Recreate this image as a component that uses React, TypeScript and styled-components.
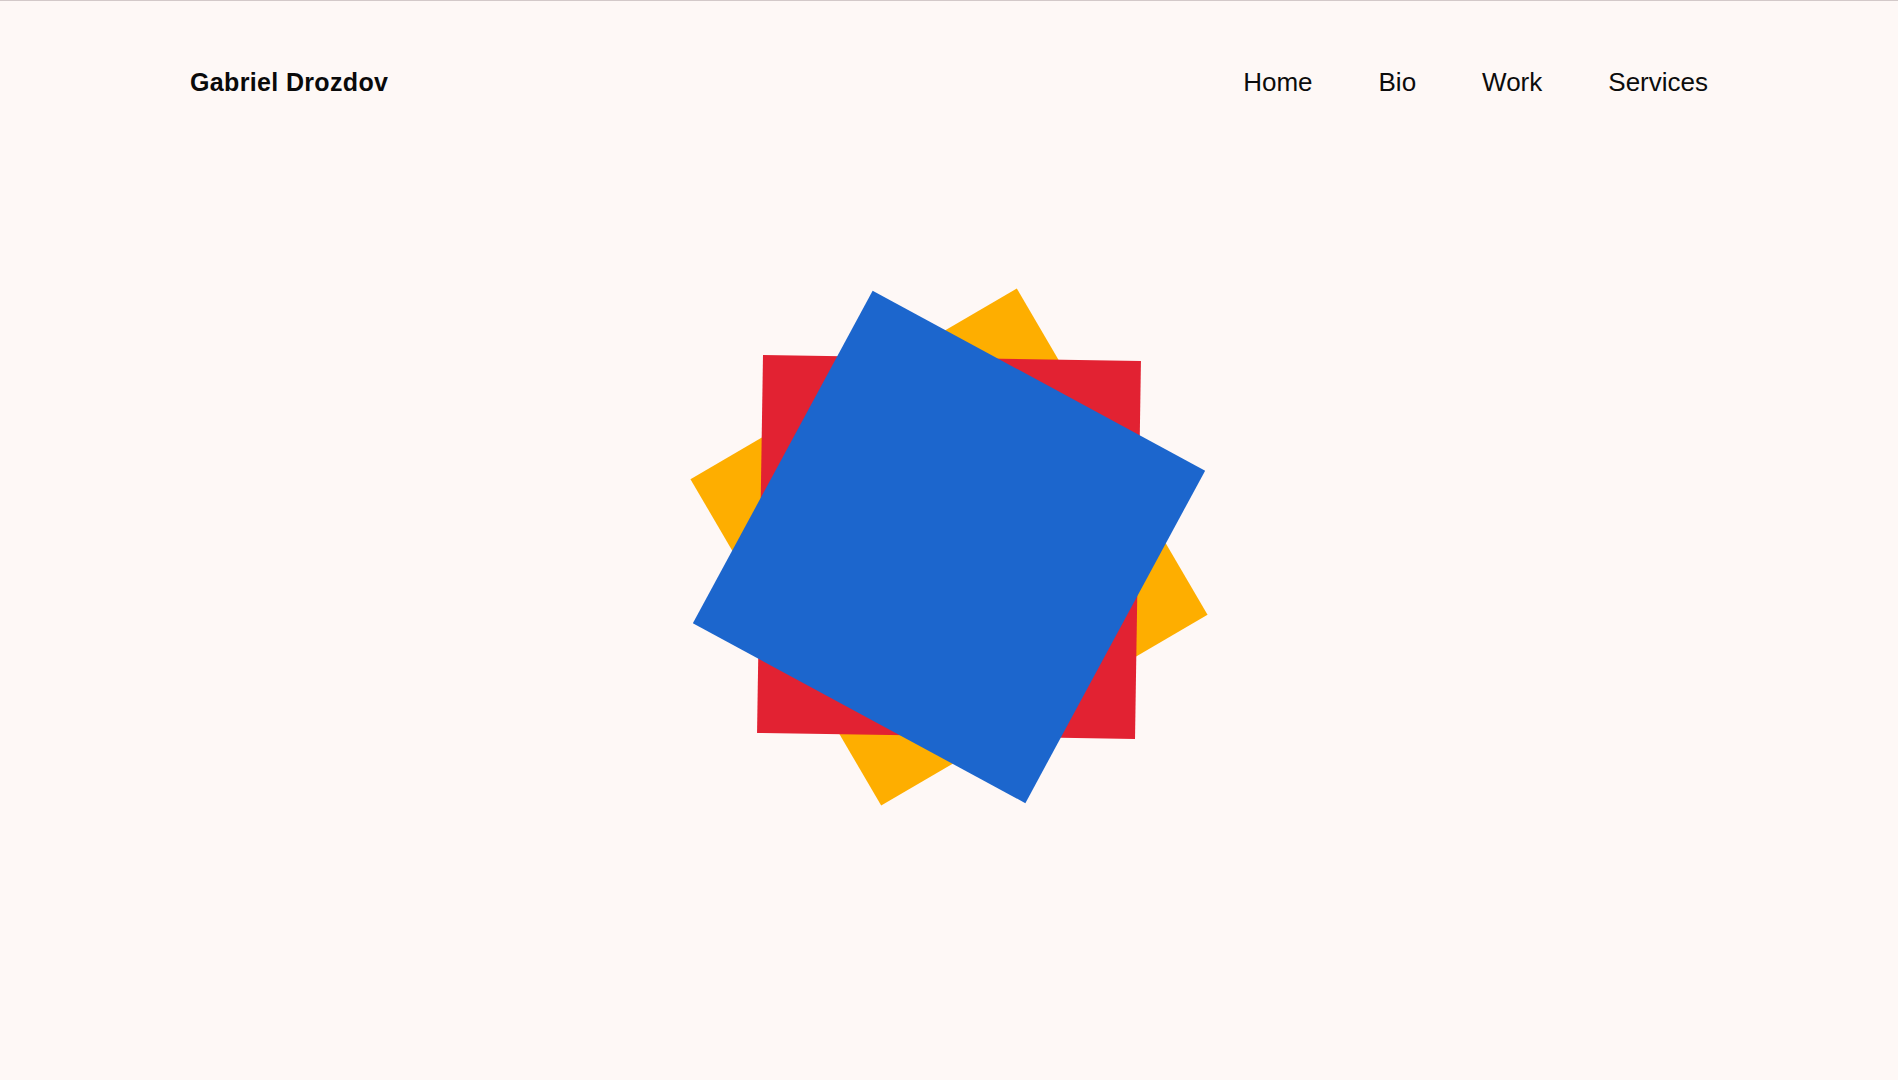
import React from "react";
import styled, { createGlobalStyle } from "styled-components";

const GlobalStyle = createGlobalStyle`
  html, body {
    margin: 0;
    padding: 0;
    background: #fef8f6;
  }
  body {
    border-top: 1px solid #d3c9c9;
    font-family: "Liberation Sans", Arial, sans-serif;
    color: #0c0c0c;
  }
  * { box-sizing: border-box; }
`;

const Page = styled.div`
  min-height: 1079px;
  display: flex;
  flex-direction: column;
`;

const Header = styled.header`
  display: flex;
  align-items: center;
  justify-content: space-between;
  padding: 64px 190px 0;
  height: 98px;
`;

const Brand = styled.a`
  font-size: 25px;
  font-weight: 700;
  letter-spacing: 0.35px;
  line-height: 34px;
  color: #0a0a0a;
  text-decoration: none;
`;

const Nav = styled.nav`
  display: flex;
  align-items: center;
  gap: 66px;
`;

const NavLink = styled.a`
  font-size: 26px;
  line-height: 34px;
  color: #0c0c0c;
  text-decoration: none;
`;

const Hero = styled.main`
  flex: 1;
  display: flex;
  justify-content: center;
  padding-top: 259px;
`;

const Stage = styled.div`
  display: grid;
  width: 378px;
  height: 378px;
`;

const Square = styled.div<{ $color: string; $angle: number }>`
  grid-area: 1 / 1;
  width: 378px;
  height: 378px;
  background: ${(p) => p.$color};
  transform: rotate(${(p) => p.$angle}deg);
`;

export default function App() {
  const links = ["Home", "Bio", "Work", "Services"];
  return (
    <>
      <GlobalStyle />
      <Page>
        <Header>
          <Brand href="#">Gabriel Drozdov</Brand>
          <Nav>
            {links.map((l) => (
              <NavLink key={l} href="#">
                {l}
              </NavLink>
            ))}
          </Nav>
        </Header>
        <Hero>
          <Stage>
            <Square $color="#feae00" $angle={-30.3} />
            <Square $color="#e22232" $angle={0.9} />
            <Square $color="#1c66cd" $angle={28.4} />
          </Stage>
        </Hero>
      </Page>
    </>
  );
}
